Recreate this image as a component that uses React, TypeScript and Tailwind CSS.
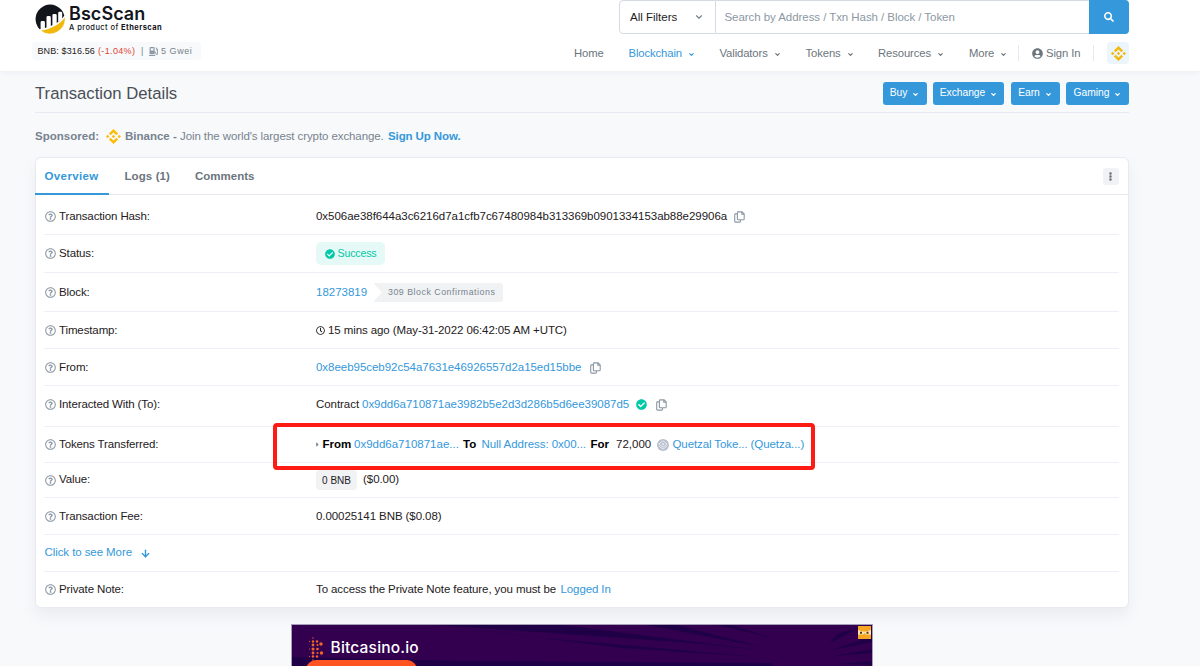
import React from 'react';
import clsx from 'clsx';
import {
  FaCaretRight,
  FaCheckCircle,
  FaEllipsisV,
  FaGasPump,
  FaRegClock,
  FaRegQuestionCircle,
  FaSearch,
  FaUserCircle,
} from 'react-icons/fa';
import { SiBinance } from 'react-icons/si';
import { ArrowDown, ChevronDown } from 'lucide-react';

const navItems = [
  { label: 'Home', width: 'w-[54.5px]', dropdown: false, active: false },
  { label: 'Blockchain', width: 'w-[91px]', dropdown: true, active: true },
  { label: 'Validators', width: 'w-[86px]', dropdown: true, active: false },
  { label: 'Tokens', width: 'w-[72.5px]', dropdown: true, active: false },
  { label: 'Resources', width: 'w-[91px]', dropdown: true, active: false },
  { label: 'More', width: 'w-[49px]', dropdown: true, active: false },
];

const actions = [
  { label: 'Buy', width: 'w-11' },
  { label: 'Exchange', width: 'w-[71px]' },
  { label: 'Earn', width: 'w-[49px]' },
  { label: 'Gaming', width: 'w-[63px]' },
];

const Logo = () => (
  <svg width="30" height="30" viewBox="0 0 30 30">
    <path d="M4.6 25.2A14.6 14.6 0 1 1 29.3 11.4C26.5 16.5 18 22.8 4.6 25.2Z" fill="#12161c" />
    <path
      d="M5.6 26V18.4q0-1.3 1.3-1.3h1.7q1.3 0 1.3 1.3V26zM11.5 24V13.3q0-1.3 1.3-1.3h1.7q1.3 0 1.3 1.3V23zM17.4 22V11.3q0-1.3 1.3-1.3h1.7q1.3 0 1.3 1.3V20zM23.2 18V9.1q0-1.3 1.3-1.3h1.4q1.3 0 1.3 1.3V15z"
      fill="#fff"
    />
    <path d="M5.8 26.6C16 24.9 25 20.4 29.8 13.4A15 15 0 0 1 5.8 26.6Z" fill="#f0b90b" />
  </svg>
);

const Header = () => (
  <header className="h-[71px] bg-white pl-8 pr-[71px] flex justify-between shadow-[0_1px_6px_rgba(140,152,164,0.12)]">
    <div className="w-[170px]">
      <div className="flex pl-[3px] pt-1">
        <Logo />
        <div className="pl-1 font-[Inter,sans-serif] whitespace-nowrap text-[#12161c]">
          <div className="text-[18px] leading-[20px] font-semibold tracking-[0.05px]">BscScan</div>
          <div className="text-[7.5px] leading-[8px] font-medium tracking-[0.42px]">
            A product of <span className="font-bold">Etherscan</span>
          </div>
        </div>
      </div>
      <div className="mt-2 h-[18px] w-[169px] rounded bg-[#f8f9fa] pl-[5.5px] pt-px flex items-center whitespace-nowrap text-[9px] text-[#1e2022]">
        <span className="w-[60.5px] tracking-[0.12px]">BNB: $316.56</span>
        <span className="w-[43px] tracking-[0.35px] text-[#de4437]">(-1.04%)</span>
        <span className="w-2 text-[#77838f]">|</span>
        <FaGasPump size={9} className="text-[#8c98a4]" />
        <span className="pl-[3px] tracking-[0.55px] text-[#77838f]">5 Gwei</span>
      </div>
    </div>

    <div className="w-[555px]">
      <div className="ml-[45px] h-[34px] flex text-[11.5px]">
        <div className="w-[97px] rounded-l border border-[#d5dae2] pl-2.5 pr-[11px] flex items-center justify-between text-[#1e2022]">
          <span className="pt-px">All Filters</span>
          <ChevronDown size={10} strokeWidth={2.8} className="text-[#77838f]" />
        </div>
        <div className="flex-1 border-y border-[#d5dae2] pl-[8.5px] pt-px flex items-center text-[#8c98a4] tracking-[-0.06px]">
          Search by Address / Txn Hash / Block / Token
        </div>
        <button className="w-10 rounded-r bg-[#3498db] text-white flex items-center justify-center">
          <FaSearch size={10} />
        </button>
      </div>
      <nav className="h-[37px] flex items-center pt-px text-[11.3px] tracking-[-0.12px] text-[#6c757d]">
        {navItems.map((item) => (
          <a key={item.label} className={clsx(item.width, 'flex items-center gap-1.5', item.active && 'text-[#3498db]')}>
            {item.label}
            {item.dropdown && <ChevronDown size={7} strokeWidth={4} className="mt-0.5" />}
          </a>
        ))}
        <div className="h-4 border-l border-[#e7eaf3] pl-[13px] flex items-center gap-[3px]">
          <FaUserCircle size={11} />
          <span className="w-[47px]">Sign In</span>
        </div>
        <div className="h-4 border-l border-[#e7eaf3]" />
        <div className="ml-auto size-[22px] rounded bg-[#ebf5fb] flex items-center justify-center">
          <SiBinance size={15} className="text-[#f0b90b]" />
        </div>
      </nav>
    </div>
  </header>
);

const Copy = () => (
  <svg width="11" height="12" viewBox="0 0 11 12" fill="none" stroke="#8c98a4" strokeWidth="1.1">
    <path d="M3.2 2.9H1.5q-.8 0-.8.8v6.6q0 .8.8.8h4.2q.8 0 .8-.8V9" />
    <path d="M4.2.9h3.9l2.1 2.1v5q0 .8-.8.8H4.2q-.8 0-.8-.8V1.7q0-.8.8-.8zM7.8.9v2.3h2.4" />
  </svg>
);

const rows = [
  {
    label: 'Transaction Hash:',
    height: 'h-10 pt-1',
    value: (
      <>
        <span className="w-[417.5px] tracking-[-0.03px]">0x506ae38f644a3c6216d7a1cfb7c67480984b313369b0901334153ab88e29906a</span>
        <Copy />
      </>
    ),
  },
  {
    label: 'Status:',
    height: 'h-[38px]',
    value: (
      <span className="h-[23px] w-[69px] rounded-[5px] bg-[#e5f9f6] pl-[9px] flex items-center gap-[2.5px] text-[10.6px] tracking-[-0.15px] text-[#00c9a7]">
        <FaCheckCircle size={10} />
        Success
      </span>
    ),
  },
  {
    label: 'Block:',
    height: 'h-[39px] pt-px',
    value: (
      <>
        <span className="w-[57px] text-[#3498db]">18273819</span>
        <span className="h-[19px] w-[130px] rounded-[3px] bg-[#f1f2f4] pl-[15px] pt-px flex items-center text-[8.8px] tracking-[0.52px] text-[#77838f] [clip-path:polygon(0_0,100%_0,100%_100%,0_100%,9px_50%)]">
          309 Block Confirmations
        </span>
      </>
    ),
  },
  {
    label: 'Timestamp:',
    height: 'h-[37px] pt-px',
    value: (
      <>
        <FaRegClock size={9} />
        <span className="pl-[3px] tracking-[-0.09px]">15 mins ago (May-31-2022 06:42:05 AM +UTC)</span>
      </>
    ),
  },
  {
    label: 'From:',
    height: 'h-[37px] pt-px',
    value: (
      <>
        <span className="w-[274px] tracking-[-0.03px] text-[#3498db]">0x8eeb95ceb92c54a7631e46926557d2a15ed15bbe</span>
        <Copy />
      </>
    ),
  },
  {
    label: 'Interacted With (To):',
    height: 'h-[41px] pb-[3px]',
    value: (
      <>
        <span className="w-[46px] tracking-[-0.05px]">Contract</span>
        <span className="w-[273.5px] tracking-[-0.02px] text-[#3498db]">0x9dd6a710871ae3982b5e2d3d286b5d6ee39087d5</span>
        <FaCheckCircle size={11} className="mr-[9px] text-[#00c9a7]" />
        <Copy />
      </>
    ),
  },
  {
    label: 'Tokens Transferred:',
    height: 'h-9',
    value: (
      <>
        <FaCaretRight size={7} className="-ml-0.5 text-[#77838f]" />
        <span className="w-[33px] pl-[1.5px] font-bold text-black">From</span>
        <span className="w-[109px] text-[#3498db]">0x9dd6a710871ae...</span>
        <span className="w-[18.5px] font-bold text-black">To</span>
        <span className="w-[109px] tracking-[-0.05px] text-[#3498db]">Null Address: 0x00...</span>
        <span className="w-[25.5px] font-bold text-black">For</span>
        <span className="w-[41px]">72,000</span>
        <svg width="12" height="12" viewBox="0 0 12 12">
          <circle cx="6" cy="6" r="6" fill="#b8bfcc" />
          <path d="M6 1.8 10.2 5 6 8.2 1.8 5zM1.8 7 6 10.2 10.2 7" fill="none" stroke="#eef0f4" strokeWidth=".9" />
          <path d="M6 3.9 7.6 5 6 6.2 4.4 5z" fill="#eef0f4" />
        </svg>
        <span className="w-[81.5px] pl-[3.5px] tracking-[-0.1px] text-[#3498db]">Quetzal Toke...</span>
        <span className="tracking-[-0.05px] text-[#3498db]">(Quetza...)</span>
        <span className="absolute z-10 -left-[43px] -top-1 h-[47px] w-[542px] rounded-[4px] border-4 border-[#fd1b14]" />
      </>
    ),
  },
  {
    label: 'Value:',
    height: 'h-[35px]',
    value: (
      <>
        <span className="mr-1.5 h-5 w-[41px] rounded-[4px] bg-[#f1f2f4] flex items-center justify-center text-[10px]">0 BNB</span>
        <span className="tracking-[-0.05px]">($0.00)</span>
      </>
    ),
  },
  {
    label: 'Transaction Fee:',
    height: 'h-[37px] pt-px',
    value: <span className="tracking-[-0.08px]">0.00025141 BNB ($0.08)</span>,
  },
  { label: '', height: 'h-[37px]', value: null },
  {
    label: 'Private Note:',
    height: 'h-[35px]',
    value: (
      <>
        <span className="w-[244.5px] tracking-[-0.1px]">To access the Private Note feature, you must be</span>
        <span className="tracking-[-0.1px] text-[#3498db]">Logged In</span>
      </>
    ),
  },
];

const Details = () => (
  <section className="mt-3 h-[451px] rounded-md border border-[#e7eaf3] bg-white shadow-[0_8px_14px_rgba(140,152,164,0.12)]">
    <div className="h-[37px] border-b border-[#e7eaf3] flex text-[11.5px] font-bold text-[#6c757d]">
      <div className="-ml-px h-[37px] w-[74px] border-b-2 border-[#3498db] pl-[9.5px] pt-0.5 flex items-center tracking-[0.38px] text-[#3498db]">
        Overview
      </div>
      <div className="w-[86px] pl-[15.5px] pt-px flex items-center tracking-[0.1px]">Logs (1)</div>
      <div className="pt-px flex items-center">Comments</div>
      <div className="ml-auto mr-[9px] mt-2.5 h-[17px] w-[16.5px] rounded-[3px] bg-[#f1f2f4] flex items-center justify-center">
        <FaEllipsisV size={9} />
      </div>
    </div>
    <div className="pl-2 pr-[9px] text-[11.5px] text-[#1e2022] whitespace-nowrap">
      {rows.map((row, i) => (
        <div key={row.label} className={clsx(row.height, 'flex', i < rows.length - 1 && 'border-b border-[#edf0f6]')}>
          {row.label ? (
            <>
              <div className="w-[272px] flex items-center gap-[3.5px] pl-[0.5px] tracking-[-0.12px]">
                <FaRegQuestionCircle size={11} className="text-[#8c98a4]" />
                {row.label}
              </div>
              <div className="relative flex items-center">{row.value}</div>
            </>
          ) : (
            <a className="flex items-center gap-2 pl-[0.5px] tracking-[-0.08px] text-[#3498db]">
              Click to see More
              <ArrowDown size={11} strokeWidth={3} />
            </a>
          )}
        </div>
      ))}
    </div>
  </section>
);

const Banner = () => (
  <div className="relative mx-auto mt-4 h-[44px] w-[582px] overflow-hidden border border-[#a5a0b8] bg-[#32004f]">
    <svg className="absolute inset-0" width="582" height="42" viewBox="0 0 582 42">
      <g fill="#1f0047">
        <path d="M145 0 240 12 467 32 330 23zM0 32 170 36 480 38 480 42H0z" />
        <path d="M145 0H270L467 25 400 18zM355 0H385L470 22zM425 0H440L480 13zM566 3 538 18 545 9zM581 24 542 31 581 28zM581 11 540 25 581 17zM581 36 545 39 581 40z" />
      </g>
    </svg>
    <div className="relative flex pl-4 pt-3">
      <svg width="18" height="24" viewBox="0 0 18 24" fill="#f2652a">
        <circle cx="5" cy="1" r=".7" />
        <circle cx="5" cy="4.5" r="1.2" /><circle cx="9" cy="4.5" r="1.2" />
        <circle cx="5" cy="8" r="1.4" /><circle cx="9.5" cy="8" r="1" /><circle cx="13" cy="7" r="1.7" />
        <circle cx="5" cy="12" r="1.5" /><circle cx="9.5" cy="12" r="1.3" />
        <circle cx="5" cy="16" r="1.4" /><circle cx="9.5" cy="16" r="1" /><circle cx="13.5" cy="16" r="1.7" />
        <circle cx="5" cy="19.5" r="1.2" /><circle cx="9" cy="19.5" r="1.2" />
        <circle cx="5" cy="23" r=".7" />
        <circle cx="1.5" cy="4.5" r=".6" /><circle cx="1.5" cy="12" r=".6" /><circle cx="1.5" cy="19.5" r=".6" />
      </svg>
      <span className="pl-[5px] font-[Inter,sans-serif] text-[15.5px] leading-[22px] font-medium tracking-[0.2px] text-white">Bitcasino.io</span>
    </div>
    <div className="absolute left-[14px] top-[35px] h-6 w-[111px] rounded-[10px] bg-[#ff5421]" />
    <svg className="absolute right-px top-px" width="13" height="13" viewBox="0 0 13 13">
      <path d="M0 0h13v13H0z" fill="#f5a623" />
      <path d="M0 4 5 5.5h3L13 4v4.5H8L6.5 7 5 8.5H0z" fill="#fbe7ac" />
      <path d="M2 5.8h2v2H2zM8.5 5.8h2v2h-2z" fill="#553418" />
    </svg>
  </div>
);

const App = () => {
  return (
    <div className="h-[666px] w-[1200px] overflow-hidden bg-[#f8f9fb] font-['Liberation_Sans',Arial,sans-serif]">
      <Header />
      <main className="pl-[35px] pr-[71px]">
        <div className="h-[42px] border-b border-[#e7eaf3] flex items-center justify-between">
          <h1 className="pt-1 text-[16.7px] text-[#4a4f55]">Transaction Details</h1>
          <div className="flex gap-[6.5px] pt-[3px]">
            {actions.map((action) => (
              <button
                key={action.label}
                className={clsx(action.width, 'h-[23px] rounded-[3px] bg-[#3498db] flex items-center justify-center gap-[5px] text-[10.3px] tracking-[-0.05px] text-white')}
              >
                {action.label}
                <ChevronDown size={7} strokeWidth={4.5} className="mt-0.5" />
              </button>
            ))}
          </div>
        </div>
        <div className="mt-3 h-5 flex items-center whitespace-nowrap pt-[3px] text-[11.5px] text-[#77838f]">
          <span className="w-[71px] font-bold tracking-[0.03px]">Sponsored:</span>
          <SiBinance size={15} className="text-[#fbbc0a]" />
          <span className="w-[59px] pl-1 font-bold">Binance -</span>
          <span className="w-[208px] tracking-[-0.09px]">Join the world's largest crypto exchange.</span>
          <span className="font-bold tracking-[-0.1px] text-[#3498db]">Sign Up Now.</span>
        </div>
        <Details />
      </main>
      <div className="pr-[37px]">
        <Banner />
      </div>
    </div>
  );
};

export default App;
